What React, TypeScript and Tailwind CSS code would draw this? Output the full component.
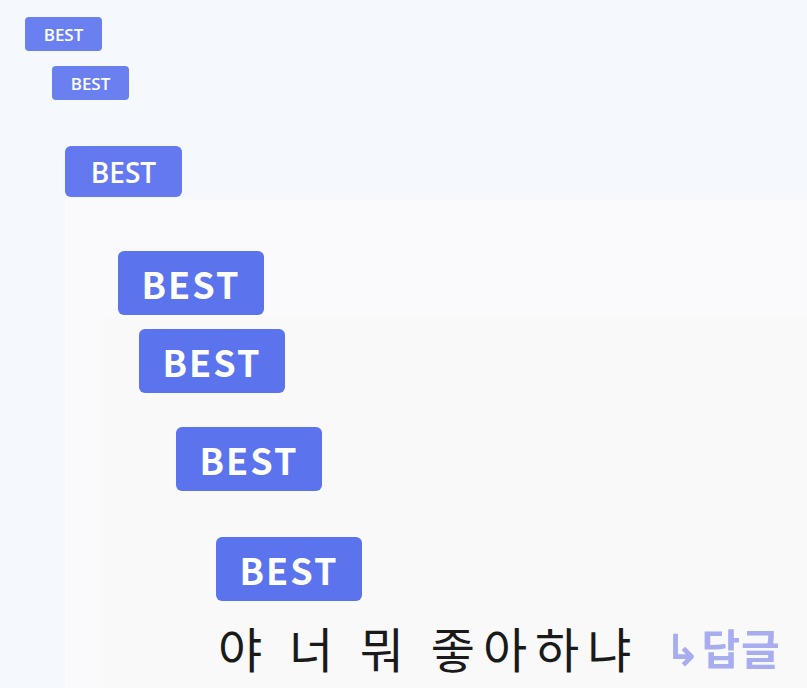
import React from "react";

type BadgeSize = "sm" | "md" | "lg";

// Small rounded "BEST" label, in three sizes
function BestBadge({ size, className = "" }: { size: BadgeSize; className?: string }) {
  const sizes: Record<BadgeSize, string> = {
    sm: "w-[77px] h-[34px] rounded-[4px] text-[17px] font-semibold bg-[#6a7ff0] [font-family:'Open_Sans',sans-serif]",
    md: "w-[117px] h-[51px] rounded-[6px] text-[28px] font-semibold bg-[#6479f0] [font-family:'Open_Sans',sans-serif]",
    lg: "w-[146px] h-[64px] rounded-[6px] text-[36px] font-bold tracking-[2px] bg-[#5b74ee] [font-family:'Noto_Sans_CJK_KR','Noto_Sans',sans-serif]",
  };
  return (
    <div
      className={`flex items-center justify-center text-white leading-none ${sizes[size]} ${className}`}
    >
      BEST
    </div>
  );
}

export default function App() {
  return (
    <div className="w-[807px] h-[688px] overflow-hidden bg-[#f5f8fd] flex flex-col">
      <BestBadge size="sm" className="ml-[25px] mt-[17px]" />
      <BestBadge size="sm" className="ml-[52px] mt-[15px]" />
      <BestBadge size="md" className="ml-[65px] mt-[46px]" />

      {/* first nested capture */}
      <div className="ml-[65px] mt-[2px] flex-1 bg-[#fafafc] pl-[40px] pt-[52px] flex flex-col">
        <BestBadge size="lg" className="ml-[13px]" />

        {/* second nested capture */}
        <div className="mt-[2px] flex-1 bg-[#f9f9fa] pt-[12px] flex flex-col">
          <BestBadge size="lg" className="ml-[34px]" />
          <BestBadge size="lg" className="ml-[71px] mt-[34px]" />
          <BestBadge size="lg" className="ml-[111px] mt-[46px]" />

          <div className="ml-[113px] mt-[22px] flex items-center whitespace-nowrap [font-family:'Noto_Sans_CJK_KR',sans-serif]">
            <span className="text-[48px] leading-none tracking-[8px] text-[#1a1a1a]">
              야 너 뭐 좋아하냐
            </span>
            <span className="ml-[26px] text-[42px] leading-none font-bold tracking-[1px] text-[#a7adef] blur-[0.6px]">
              ↳답글
            </span>
          </div>
        </div>
      </div>
    </div>
  );
}
